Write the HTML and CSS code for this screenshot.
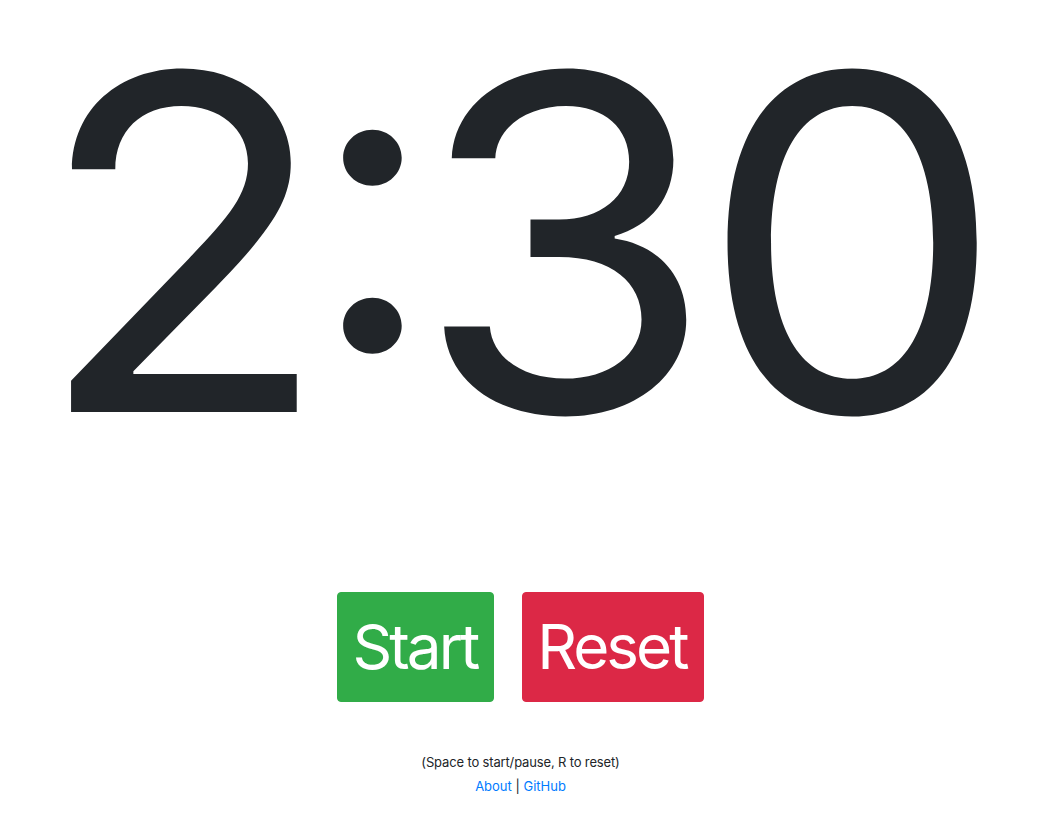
FILE: index.html
```html
<!DOCTYPE html>
<html lang="en">
<head>
<meta charset="utf-8">
<title>Timer</title>
<link rel="stylesheet" href="styles.css">
</head>
<body>
<main class="page">
  <div class="clock">2<span class="colon">:</span>30</div>
  <div class="controls">
    <button class="btn btn-start">Start</button>
    <button class="btn btn-reset">Reset</button>
  </div>
  <p class="hint">(Space to start/pause, R to reset)</p>
  <p class="links"><a href="#">About</a> | <a href="#">GitHub</a></p>
</main>
</body>
</html>
```

FILE: styles.css
```css
html, body {
  margin: 0;
  padding: 0;
  background: #fff;
}
body {
  font-family: Inter, "Liberation Sans", sans-serif;
  color: #212529;
}
.page {
  display: flex;
  flex-direction: column;
  align-items: center;
  padding-right: 15px;
}
.clock {
  font-size: 466px;
  line-height: 1;
  margin-top: 10px;
  margin-right: 18px;
  letter-spacing: -16px;
  white-space: nowrap;
  transform: scaleX(1.045);
}
.colon {
  font-size: 425px;
  line-height: 0;
  vertical-align: 61px;
  margin: 0 -5px 0 -6px;
}
.controls {
  display: flex;
  gap: 28px;
  margin-top: 116px;
}
.btn {
  font-family: Inter, "Liberation Sans", sans-serif;
  font-size: 62px;
  letter-spacing: -3px;
  line-height: 108px;
  padding: 0 16px 0 14px;
  border: 1px solid transparent;
  border-radius: 4px;
  color: #fff;
  cursor: pointer;
}
.btn-start {
  background: #31ac48;
  border-color: #31ac48;
}
.btn-reset {
  background: #dc2846;
  border-color: #dc2846;
}
.hint {
  font-size: 13px;
  letter-spacing: -0.15px;
  margin: 50px 0 0;
  line-height: 20px;
}
.links {
  font-size: 13px;
  margin: 4px 0 0;
  line-height: 20px;
}
.links a {
  color: #007bff;
  text-decoration: none;
}
```
